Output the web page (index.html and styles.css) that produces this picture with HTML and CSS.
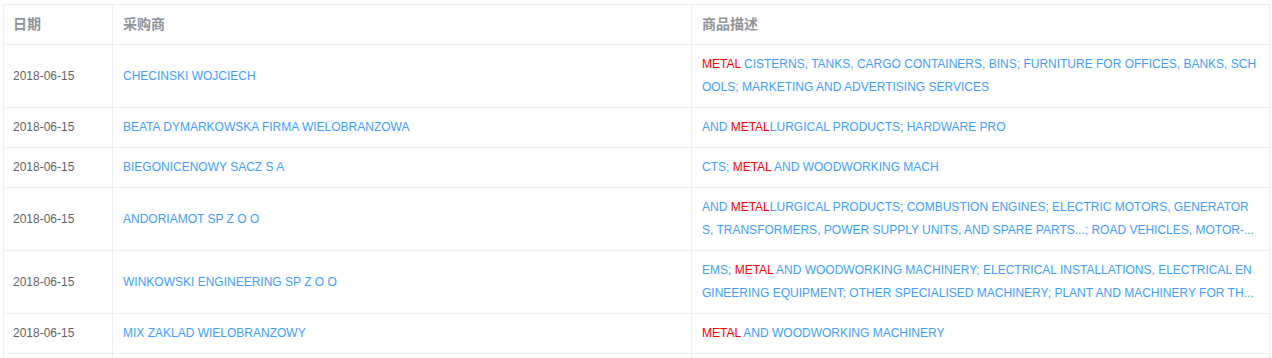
FILE: index.html
```html
<!DOCTYPE html>
<html lang="zh-CN">
<head>
<meta charset="utf-8">
<title>采购商列表</title>
<link rel="stylesheet" href="styles.css">
</head>
<body>
<div class="page">
  <table class="grid">
    <colgroup>
      <col class="c-date">
      <col class="c-buyer">
      <col class="c-desc">
    </colgroup>
    <thead>
      <tr>
        <th>日期</th>
        <th>采购商</th>
        <th>商品描述</th>
      </tr>
    </thead>
    <tbody>
      <tr>
        <td class="date">2018-06-15</td>
        <td><a class="link">CHECINSKI WOJCIECH</a></td>
        <td class="desc"><span class="hl">METAL</span> CISTERNS, TANKS, CARGO CONTAINERS, BINS; FURNITURE FOR OFFICES, BANKS, SCHOOLS; MARKETING AND ADVERTISING SERVICES</td>
      </tr>
      <tr>
        <td class="date">2018-06-15</td>
        <td><a class="link">BEATA DYMARKOWSKA FIRMA WIELOBRANZOWA</a></td>
        <td class="desc">AND <span class="hl">METAL</span>LURGICAL PRODUCTS; HARDWARE PRO</td>
      </tr>
      <tr>
        <td class="date">2018-06-15</td>
        <td><a class="link">BIEGONICENOWY SACZ S A</a></td>
        <td class="desc">CTS; <span class="hl">METAL</span> AND WOODWORKING MACH</td>
      </tr>
      <tr>
        <td class="date">2018-06-15</td>
        <td><a class="link">ANDORIAMOT SP Z O O</a></td>
        <td class="desc">AND <span class="hl">METAL</span>LURGICAL PRODUCTS; COMBUSTION ENGINES; ELECTRIC MOTORS, GENERATORS, TRANSFORMERS, POWER SUPPLY UNITS, AND SPARE PARTS...; ROAD VEHICLES, MOTOR-...</td>
      </tr>
      <tr>
        <td class="date">2018-06-15</td>
        <td><a class="link">WINKOWSKI ENGINEERING SP Z O O</a></td>
        <td class="desc">EMS; <span class="hl">METAL</span> AND WOODWORKING MACHINERY; ELECTRICAL INSTALLATIONS, ELECTRICAL ENGINEERING EQUIPMENT; OTHER SPECIALISED MACHINERY; PLANT AND MACHINERY FOR TH...</td>
      </tr>
      <tr>
        <td class="date">2018-06-15</td>
        <td><a class="link">MIX ZAKLAD WIELOBRANZOWY</a></td>
        <td class="desc"><span class="hl">METAL</span> AND WOODWORKING MACHINERY</td>
      </tr>
      <tr class="spacer">
        <td></td>
        <td></td>
        <td></td>
      </tr>
    </tbody>
  </table>
</div>
</body>
</html>
```

FILE: styles.css
```css
html, body {
  margin: 0;
  padding: 0;
  background: #ffffff;
}

body {
  font-family: "Liberation Sans", Arial, "Noto Sans CJK SC", sans-serif;
  font-size: 12px;
  color: #606266;
}

.page {
  padding: 4px 3px 0 3px;
}

.grid {
  table-layout: fixed;
  width: 1267px;
  border-collapse: separate;
  border-spacing: 0;
  border-left: 1px solid #ebeef5;
  border-top: 1px solid #ebeef5;
}

.c-date { width: 109px; }
.c-buyer { width: 579px; }
.c-desc { width: 578px; }

.grid th,
.grid td {
  padding: 8px 10px 8px 9px;
  line-height: 23px;
  text-align: left;
  vertical-align: middle;
  border-right: 1px solid #ebeef5;
  border-bottom: 1px solid #ebeef5;
  box-sizing: border-box;
}

.grid th {
  font-family: "Liberation Sans", "Noto Sans CJK SC", sans-serif;
  font-size: 14px;
  font-weight: 700;
  color: #909399;
}

.grid td:not(:first-child),
.grid th:not(:first-child) {
  padding-left: 10px;
}

.grid td.date {
  color: #606266;
}

.spacer td {
  height: 40px;
}

.link {
  color: #409eff;
  text-decoration: none;
  cursor: pointer;
}

.desc {
  color: #409eff;
  word-break: break-all;
}

.hl {
  color: #ff0000;
}
```
